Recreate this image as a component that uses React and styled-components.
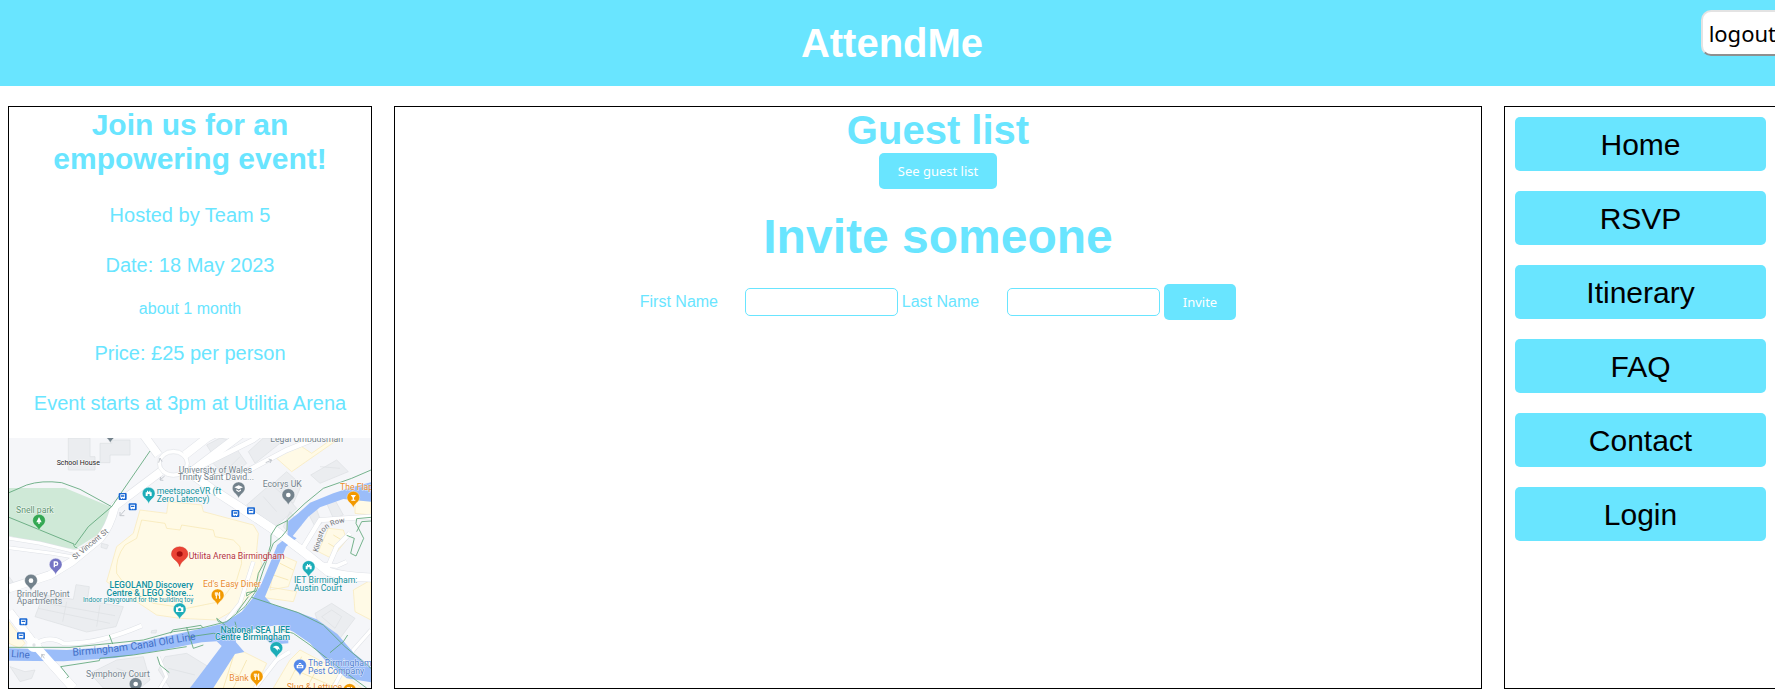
import React from "react";
import styled, { createGlobalStyle } from "styled-components";

const CYAN = "#69e5ff";

const GlobalStyle = createGlobalStyle`
  *, *::before, *::after { box-sizing: border-box; }
  body {
    margin: 0;
    background: #fff;
    font-family: "Liberation Sans", Arial, sans-serif;
    font-size: 16px;
  }
  h1, h2, p { margin: 0; }
`;

const Page = styled.div`
  overflow: hidden;
`;

const Header = styled.header`
  display: grid;
  grid-template-columns: 1fr auto 1fr;
  align-items: start;
  margin-right: -9px;
  background: ${CYAN};
`;

const Brand = styled.h1`
  grid-column: 2;
  padding: 20px 0;
  color: #fff;
  font-size: 40px;
  line-height: 46px;
`;

const LogoutButton = styled.button`
  justify-self: end;
  height: 46px;
  margin-top: 10px;
  padding: 0 6px;
  border: 2px outset #e3e3e3;
  border-radius: 10px;
  background: #fff;
  color: #000;
  font-family: "Noto Sans", sans-serif;
  font-size: 22px;
  line-height: 32px;
`;

const Columns = styled.div`
  display: grid;
  grid-template-columns: 364fr 1088fr 273fr;
  gap: 22px;
  margin: 20px -2px 0 8px;
`;

const Panel = styled.section`
  min-width: 0;
  border: 1px solid #000;
  color: ${CYAN};
  text-align: center;
`;

const EventTitle = styled.h2`
  padding: 1px 30px 14px;
  font-size: 30px;
  line-height: 34px;
`;

const EventLine = styled.p`
  font-size: ${(p) => (p.$small ? 16 : 20)}px;
  line-height: ${(p) => (p.$small ? 38 : 50)}px;
`;

const MapDrawing = styled.svg`
  display: block;
  width: 100%;
  height: 250px;
  margin-top: 10px;
  font-family: Roboto, sans-serif;
`;

const SectionTitle = styled.h2`
  font-size: 40px;
  line-height: 46px;
`;

const FormTitle = styled.h2`
  margin: 20px 0;
  font-size: 48px;
  line-height: 55px;
`;

const ActionButton = styled.button`
  height: 36px;
  padding: 0 19px;
  border: 0;
  border-radius: 5px;
  background: ${CYAN};
  color: #fff;
  font-family: "Noto Sans", sans-serif;
  font-size: 13px;
  vertical-align: top;
`;

const InviteForm = styled.form`
  display: flex;
  flex-wrap: wrap;
  align-items: center;
  justify-content: center;
  gap: 4px;
`;

const FieldLabel = styled.label`
  width: 101px;
  text-align: left;
`;

const Field = styled.input`
  width: 153px;
  height: 28px;
  padding: 4px;
  border: 1px solid ${CYAN};
  border-radius: 5px;
`;

const Nav = styled.nav`
  display: flex;
  flex-direction: column;
  gap: 20px;
  padding: 10px;
`;

const NavLink = styled.a`
  padding: 11px 10px 9px;
  border-radius: 5px;
  background: ${CYAN};
  color: #000;
  font-size: 30px;
  line-height: 34px;
  text-decoration: none;
`;

const GREY = "#73828c";
const TEAL = "#12919d";
const ORANGE = "#e98b2c";

const labels = [
  { x: 811, y: 37, text: "Legal Ombudsman", color: GREY },
  { x: 170, y: 105, text: "School House", color: "#222", size: 21 },
  { x: 536, y: 129, text: "University of Wales", color: GREY },
  { x: 534, y: 151, text: "Trinity Saint David...", color: GREY },
  { x: 470, y: 193, text: "meetspaceVR (ft", color: TEAL },
  { x: 470, y: 216, text: "Zero Latency)", color: TEAL },
  { x: 788, y: 171, text: "Ecorys UK", color: GREY },
  { x: 1020, y: 181, text: "The Flapper", color: ORANGE },
  { x: 48, y: 248, text: "Snell park", color: "#5b9470" },
  { x: 566, y: 387, text: "Utilita Arena Birmingham", color: "#b5323a" },
  { x: 580, y: 475, text: "LEGOLAND Discovery", color: TEAL, anchor: "end", bold: true },
  { x: 580, y: 497, text: "Centre & LEGO Store...", color: TEAL, anchor: "end", bold: true },
  { x: 580, y: 516, text: "Indoor playground for the building toy", color: TEAL, anchor: "end", size: 20 },
  { x: 609, y: 472, text: "Ed's Easy Diner", color: ORANGE },
  { x: 882, y: 460, text: "IET Birmingham:", color: TEAL },
  { x: 882, y: 482, text: "Austin Court", color: TEAL },
  { x: 50, y: 500, text: "Brindley Point", color: GREY },
  { x: 50, y: 522, text: "Apartments", color: GREY },
  { x: 870, y: 609, text: "National SEA LIFE", color: TEAL, anchor: "end", bold: true },
  { x: 870, y: 630, text: "Centre Birmingham", color: TEAL, anchor: "end", bold: true },
  { x: 258, y: 740, text: "Symphony Court", color: GREY },
  { x: 688, y: 752, text: "Bank", color: ORANGE },
  { x: 924, y: 709, text: "The Birmingham", color: "#4f7fd0" },
  { x: 924, y: 731, text: "Pest Company", color: "#4f7fd0" },
  { x: 860, y: 780, text: "Slug & Lettuce", color: ORANGE },
];

const glyphs = {
  dot: <circle r="7" fill="#fff" />,
  tree: <path d="M0-11 8 5H2V10H-2V5H-8Z" fill="#fff" />,
  parking: <path d="M-4 8V-8H1a5 5 0 0 1 0 10H-4" fill="none" stroke="#fff" strokeWidth="4" />,
  castle: <path d="M-9 7V-4H-5V-9H-2V-6H2V-9H5V-4H9V7H3V1H-3V7Z" fill="#fff" />,
  camera: <path fillRule="evenodd" d="M-11-6H-5L-3-9H3L5-6H11V8H-11ZM0-4a5 5 0 1 0 0 10a5 5 0 1 0 0-10" fill="#fff" />,
  food: <path d="M-7-9V-3Q-7 1-4 1T-1-3V-9M-4-9V10M6-9Q2-5 4 2H6V10Z" fill="none" stroke="#fff" strokeWidth="3" />,
  drink: <path d="M-8-8H8L2 0V6H6V9H-6V6H-2V0Z" fill="#fff" />,
  school: <path d="M-13-3 0-9 13-3 0 3ZM-7 3 0 7 7 3V7L0 11-7 7Z" fill="#fff" />,
  fish: <path d="M-11-2Q-3-10 7-4L11 5 5 3 3 9Q1 1-11-2Z" fill="#fff" />,
  bag: <path fillRule="evenodd" d="M-10-2H-5L-3-8H3L5-2H10V8H-10ZM-3-2H3L2-5H-2ZM-6 2V5H6V2Z" fill="#fff" />,
};

const pins = [
  { x: 331, y: 9, color: GREY, glyph: "dot" },
  { x: 716, y: 175, color: GREY, glyph: "school" },
  { x: 865, y: 195, color: GREY, glyph: "dot" },
  { x: 93, y: 452, color: GREY, glyph: "dot" },
  { x: 407, y: 762, color: GREY, glyph: "dot" },
  { x: 446, y: 191, color: "#1cadb8", glyph: "castle" },
  { x: 926, y: 411, color: "#1cadb8", glyph: "castle" },
  { x: 539, y: 538, color: "#1cadb8", glyph: "camera" },
  { x: 829, y: 654, color: "#1cadb8", glyph: "fish" },
  { x: 117, y: 272, color: "#34a853", glyph: "tree" },
  { x: 167, y: 404, color: "#7575c4", glyph: "parking" },
  { x: 1060, y: 203, color: "#f29900", glyph: "drink" },
  { x: 653, y: 496, color: "#f29900", glyph: "food" },
  { x: 770, y: 740, color: "#f29900", glyph: "food" },
  { x: 1049, y: 780, color: "#f29900", glyph: "food" },
  { x: 900, y: 707, color: "#5287e8", glyph: "bag" },
];

const busStops = [[368, 199], [398, 230], [706, 250], [753, 242], [70, 575], [63, 617]];

const roads = [
  { d: "M420 0 475 75M555 75 620 24 665 0M575 125 740 0M482 125 345 228Q330 290 300 325L215 395 150 435 27 475", w: 24 },
  { d: "M565 125 640 180 710 225 830 305 910 365 985 425Q1030 440 1113 443", w: 25 },
  { d: "M27 353 155 370 225 382M27 325 120 340 225 365 290 340", w: 9 },
  { d: "M27 545 100 640 220 774", w: 25 },
  { d: "M105 642Q150 615 190 640 290 645 425 587", w: 12 },
  { d: "M575 130 700 145 860 60 1010 0M600 110 760 30 800 0", w: 14 },
  { d: "M905 360 960 270 1113 260M980 420 1010 350 1050 310", w: 13 },
  { d: "M940 400 1010 408 1040 395M765 774 830 690 870 665", w: 11 },
  { d: "M475 680 500 740 480 774", w: 9 },
  { d: "M760 395 720 520 680 570M1000 774 1060 660 1113 600", w: 10 },
];

const greyBlocks =
  "M205 24H270V80H285V120H205ZM300 40H335V30H390V75H330V98H300ZM635 95 705 50 740 100 680 145ZM745 65 790 24 860 24 765 100ZM620 45 660 24 690 30 640 78Z" +
  "M740 225 820 155 890 235 825 290ZM815 165 860 125 905 165 880 220ZM932 135 1010 90 1045 125 960 160ZM870 245 905 285 875 320 850 290ZM922 245 945 225 965 280 945 290ZM980 220 1005 210 1030 255 1000 265Z" +
  "M130 495 220 508 228 464 268 470 262 512 370 530 348 590 260 606 105 560ZM945 550 995 520 1065 565 1020 625 960 595ZM350 690 430 680 450 750 420 774 310 774 270 730ZM495 680 560 670 625 710 570 774 510 774 475 720Z" +
  "M30 710 75 725 105 720 95 745 60 755ZM27 440 50 470 27 490ZM305 340 325 345 320 357 303 352ZM455 602 470 600 468 609 453 609Z";

const yellowBlocks =
  "M420 240 500 250 505 215 605 225 610 245 760 285 775 310 770 360 785 400 765 480 720 530 650 570 540 565 470 555 320 455 350 350 400 310Z" +
  "M830 85 890 40 935 70 985 35 1020 24 875 125ZM985 295 1030 300 1040 330 995 385 955 365ZM830 370 890 395 865 470 810 480ZM770 500 880 515 890 485 800 470Z" +
  "M665 680 720 660 800 700 765 774 605 774ZM870 690 900 660 1015 720 1085 774 820 774ZM27 575 75 640 60 655 27 640ZM1060 480 1113 450V570L1065 545ZM1065 215 1113 205V255L1065 250Z";

function MapPin({ pin }) {
  return (
    <g transform={`translate(${pin.x} ${pin.y})`}>
      <path
        d="M0 30C-4 16-19 14-19-1A19 18 0 0 1 19-1C19 14 4 16 0 30Z"
        fill={pin.color}
        stroke="#fff"
        strokeWidth="1"
      />
      {glyphs[pin.glyph]}
    </g>
  );
}

function VenueMap() {
  return (
    <MapDrawing
      viewBox="27 24 1086 750"
      preserveAspectRatio="xMidYMid slice"
      role="img"
      aria-label="Map of the area round Utilita Arena Birmingham"
    >
      <rect x="-400" y="-200" width="2000" height="1200" fill="#f5f6f9" />
      <path d={greyBlocks} fill="#ebedf0" stroke="#dcdfe3" strokeWidth="2" />
      <path d={yellowBlocks} fill="#fffae6" stroke="#f9e9b5" strokeWidth="2" />
      <path
        d="M425 270 495 280 500 295 540 300 545 285 640 300 645 320 700 330 720 350 725 400 710 450 660 515 560 535 460 520Q375 475 350 430 345 385 375 345L410 325Z"
        fill="none"
        stroke="#f6e5ad"
        strokeWidth="2"
      />
      <path
        d="M150 522 345 557M115 535 330 580M200 515 188 575M300 525 290 590M965 560 995 540 1025 560 1005 595ZM690 110 720 80M790 200 830 245M845 165 875 200M505 715 585 735M350 715 420 740M960 110 1020 115"
        fill="none"
        stroke="#dcdfe3"
        strokeWidth="2"
      />
      <path
        d="M700 680 670 774M740 690 700 774M690 725 745 750M905 680 870 750M960 700 920 774M885 720 1010 774M1020 730 990 774M840 400 880 420M820 435 865 450M1000 315 1025 330M985 340 1010 355"
        fill="none"
        stroke="#f3e0a2"
        strokeWidth="2"
      />
      <path d="M27 174H195L335 232 345 242Q325 290 300 310L225 357 180 353 27 318Z" fill="#cfe9d7" />
      {roads.map((r) => (
        <path key={r.d} d={r.d} fill="none" stroke="#dfe2e7" strokeWidth={r.w + 3} />
      ))}
      <ellipse cx="520" cy="100" rx="48" ry="42" fill="#fff" stroke="#dfe2e7" strokeWidth="2" />
      {roads.map((r) => (
        <path key={r.d} d={r.d} fill="none" stroke="#fff" strokeWidth={r.w} />
      ))}
      <ellipse cx="520" cy="100" rx="36" ry="29" fill="#f5f6f9" stroke="#dfe2e7" strokeWidth="2" />
      <g fill="#9bbdf9">
        <path d="M1113 157 1055 172 1000 190 930 218 895 250 865 274 862 320 832 345 810 400 785 460 758 505 725 545 665 582 585 600 440 632 340 650 200 660 27 655V692L190 694 345 684 500 658 605 637 650 634 665 648 570 774H640L705 672 733 666 708 637 705 610 790 592 835 585 880 605 930 640 975 690 1040 745 1113 757V710L1062 670 1012 612 950 568 890 545 815 522 795 500 820 440 858 350 890 325 878 318 925 260 960 232 1030 207 1113 215Z" />
        <path d="M790 622 865 628V640L838 642 810 640Z" />
      </g>
      <path d="M27 545 100 640 220 774" fill="none" stroke="#fff" strokeWidth="24" />
      <path d="M710 225 830 305 910 365" fill="none" stroke="#fff" strokeWidth="24" />
      <circle cx="102" cy="645" r="21" fill="#fff" />
      <circle cx="102" cy="645" r="5" fill="#e1e3e7" />
      <g fill="none" stroke="#5ba577" strokeWidth="2.5">
        <path d="M27 188 80 165Q125 150 185 158L240 178 335 230 450 63M335 230 265 290 225 345M27 262 120 300 222 342Q220 352 232 354" />
        <path d="M1113 120 1055 145 970 175 915 220 862 270 861 300 845 320 820 340 808 370 790 420 770 480 735 530 680 575 600 595M862 272 830 288 813 315 812 345 800 385 775 430 765 480 740 498 740 488 770 483M745 500 710 548" />
        <path d="M600 595 520 605 430 630 335 640 210 652 27 652M328 615 338 642M512 610 518 600 603 586 608 593M560 592 580 655 610 645M572 620 640 610 650 612M705 610 650 565 655 575 665 577M705 575 710 595" />
        <path d="M755 502 895 548 970 585 1035 650 1113 715M835 598 880 610 930 645 1000 700 1060 745 1100 774M1043 615 1030 635 990 668" />
        <path d="M300 685 298 692 182 710 206 740 200 744M300 685 400 675 560 650M472 680 480 705 508 728" />
        <path d="M1113 262 1070 266 1068 280 1091 325 1068 378 1052 370 1063 325 1040 316M1070 305 1085 275 1113 273" />
      </g>
      <g fill="none" stroke="#c4c8ce" strokeWidth="3">
        <path d="M476 98 480 84 486 95M494 138 480 150 482 141M480 150 490 151M375 240 360 257 360 246M360 257 373 257M797 98 815 90 806 87M815 90 810 99M125 673 133 685M125 673 125 683M125 673 135 675" />
      </g>
      <defs>
        <path id="canal-name" d="M218 677Q350 667 440 653T625 622" />
        <path id="vincent-name" d="M225 390 340 295" />
        <path id="kingston-name" d="M953 367 968 315Q980 285 1030 278" />
      </defs>
      <text fontSize="31" fill="#426fc7">
        <textPath href="#canal-name">Birmingham Canal Old Line</textPath>
      </text>
      <text x="33" y="681" fontSize="30" fill="#426fc7" transform="rotate(4 33 681)">Line</text>
      <text fontSize="23" fill="#737579">
        <textPath href="#vincent-name">St Vincent St</textPath>
      </text>
      <text fontSize="22" fill="#737579">
        <textPath href="#kingston-name">Kingston Row</textPath>
      </text>
      {labels.map((l) => (
        <text
          key={l.text}
          x={l.x}
          y={l.y}
          fill={l.color}
          fontSize={l.size || 26}
          fontWeight={l.bold ? 500 : 400}
          textAnchor={l.anchor || "start"}
          stroke="#fff"
          strokeWidth="3"
          strokeOpacity="0.7"
          paintOrder="stroke"
        >
          {l.text}
        </text>
      ))}
      {busStops.map(([x, y]) => (
        <g key={`${x}-${y}`} transform={`translate(${x} ${y})`}>
          <rect x="-12" y="-10" width="24" height="21" rx="3" fill="#1967d2" />
          <path fillRule="evenodd" d="M-7-6H7V6H5V8H2V6H-2V8H-5V6H-7ZM-5-3V1H5V-3Z" fill="#fff" />
        </g>
      ))}
      {pins.map((pin) => (
        <MapPin key={`${pin.x}-${pin.y}`} pin={pin} />
      ))}
      <path
        d="M539 410C535 391 514 388 514 372A25 22 0 0 1 564 372C564 388 543 391 539 410Z"
        fill="#ea4335"
        stroke="#c5291d"
        strokeWidth="1"
      />
      <ellipse cx="539" cy="372" rx="9" ry="8" fill="#a50e0e" />
    </MapDrawing>
  );
}

const navItems = ["Home", "RSVP", "Itinerary", "FAQ", "Contact", "Login"];

export default function App() {
  return (
    <Page>
      <GlobalStyle />
      <Header>
        <Brand>AttendMe</Brand>
        <LogoutButton type="button">logout</LogoutButton>
      </Header>
      <Columns>
        <Panel>
          <EventTitle>Join us for an empowering event!</EventTitle>
          <EventLine>Hosted by Team 5</EventLine>
          <EventLine>Date: 18 May 2023</EventLine>
          <EventLine $small>about 1 month</EventLine>
          <EventLine>Price: £25 per person</EventLine>
          <EventLine>Event starts at 3pm at Utilitia Arena</EventLine>
          <VenueMap />
        </Panel>
        <Panel as="main">
          <SectionTitle>Guest list</SectionTitle>
          <ActionButton type="button">See guest list</ActionButton>
          <FormTitle>Invite someone</FormTitle>
          <InviteForm onSubmit={(e) => e.preventDefault()}>
            <FieldLabel htmlFor="first-name">First Name</FieldLabel>
            <Field id="first-name" type="text" />
            <FieldLabel htmlFor="last-name">Last Name</FieldLabel>
            <Field id="last-name" type="text" />
            <ActionButton type="submit">Invite</ActionButton>
          </InviteForm>
        </Panel>
        <Panel as="aside">
          <Nav aria-label="Main">
            {navItems.map((item) => (
              <NavLink key={item} href={`#${item.toLowerCase()}`}>
                {item}
              </NavLink>
            ))}
          </Nav>
        </Panel>
      </Columns>
    </Page>
  );
}
